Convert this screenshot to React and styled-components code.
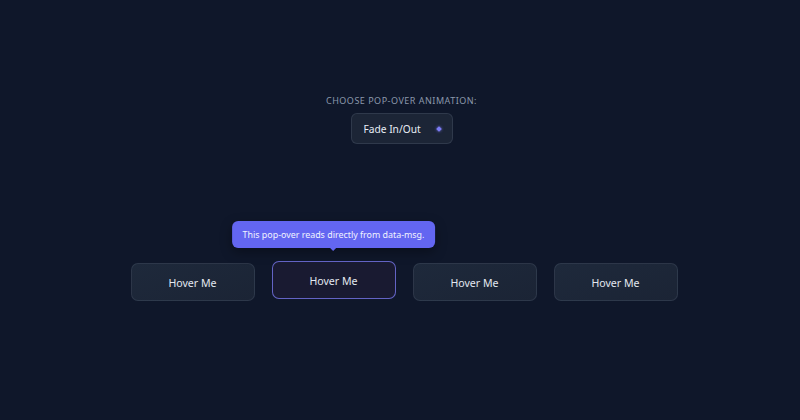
import React from 'react';
import styled, { createGlobalStyle } from 'styled-components';

const GlobalStyle = createGlobalStyle`
  html, body {
    margin: 0;
    padding: 0;
    background: #0f172a;
  }
  body {
    font-family: "Noto Sans", "Open Sans", sans-serif;
    color: #e2e8f0;
  }
`;

const Page = styled.div`
  width: 800px;
  height: 420px;
  box-sizing: border-box;
  padding-top: 95px;
  display: flex;
  flex-direction: column;
  align-items: center;
  background: #0f172a;
`;

const Controls = styled.div`
  display: flex;
  flex-direction: column;
  align-items: center;
  gap: 7px;
`;

const Label = styled.div`
  margin-left: 3px;
  font-size: 9px;
  letter-spacing: 0.5px;
  color: #8b97ab;
  text-transform: uppercase;
  line-height: 11px;
`;

const Select = styled.div`
  box-sizing: border-box;
  width: 102px;
  height: 31px;
  margin-left: 3px;
  padding: 0 11px 0 12px;
  display: flex;
  align-items: center;
  justify-content: space-between;
  background: #1c2536;
  border: 1px solid rgba(148, 163, 184, 0.16);
  border-radius: 6px;
  font-size: 10.2px;
  color: #e8edf5;
`;

const Dot = styled.span`
  width: 4px;
  height: 4px;
  background: #7c7cf5;
  transform: rotate(45deg);
  box-shadow: 0 0 3px rgba(124, 124, 245, 0.8);
`;

const Row = styled.div`
  margin-top: 119px;
  margin-left: 8px;
  display: flex;
  gap: 17px;
`;

const Slot = styled.div`
  position: relative;
`;

const HoverButton = styled.button`
  box-sizing: border-box;
  width: 124px;
  height: 38px;
  padding-top: 2px;
  border-radius: 7px;
  font-family: inherit;
  font-size: 10.6px;
  color: #e2e8f0;
  cursor: pointer;
  background: ${p => (p.$active ? '#191a31' : 'linear-gradient(160deg, #1e293b, #1b2435)')};
  border: 1px solid ${p => (p.$active ? 'rgba(124, 124, 245, 0.75)' : 'rgba(148, 163, 184, 0.14)')};
  transform: translateY(${p => (p.$active ? '-2px' : '0')});
`;

const Tooltip = styled.div`
  position: absolute;
  left: 50%;
  bottom: calc(100% + 15px);
  transform: translateX(-50%);
  white-space: nowrap;
  padding: 0 11px;
  height: 27px;
  display: flex;
  align-items: center;
  background: #6366f1;
  color: #f1f3ff;
  font-size: 8.9px;
  border-radius: 6px;
  box-shadow: 0 4px 12px rgba(0, 0, 0, 0.35);

  &::after {
    content: '';
    position: absolute;
    top: 100%;
    left: 50%;
    transform: translateX(-50%);
    border: 3px solid transparent;
    border-top-color: #6366f1;
  }
`;

const buttons = [
  { id: 1 },
  { id: 2, msg: 'This pop-over reads directly from data-msg.' },
  { id: 3 },
  { id: 4 },
];

export default function App() {
  return (
    <Page>
      <GlobalStyle />
      <Controls>
        <Label>Choose pop-over animation:</Label>
        <Select>
          <span>Fade In/Out</span>
          <Dot />
        </Select>
      </Controls>
      <Row>
        {buttons.map(b => (
          <Slot key={b.id}>
            {b.msg && <Tooltip>{b.msg}</Tooltip>}
            <HoverButton $active={!!b.msg} data-msg={b.msg}>Hover Me</HoverButton>
          </Slot>
        ))}
      </Row>
    </Page>
  );
}
